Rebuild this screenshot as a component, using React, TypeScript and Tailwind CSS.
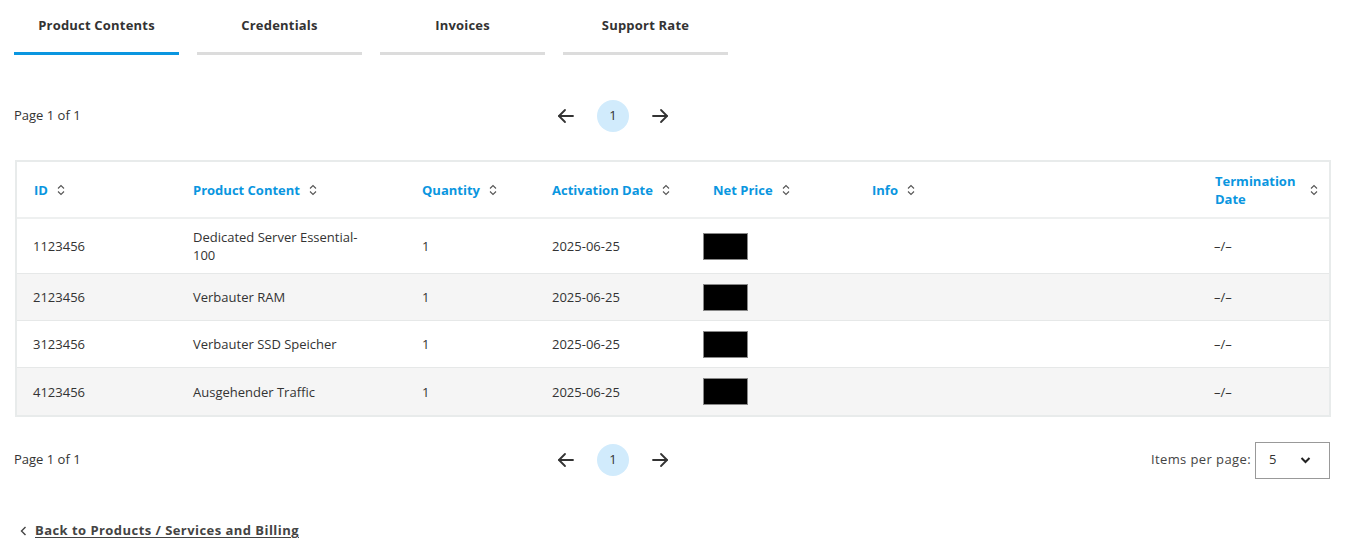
import React from "react";

const font = { fontFamily: '"Open Sans", "Liberation Sans", sans-serif' };

const tabs = ["Product Contents", "Credentials", "Invoices", "Support Rate"];

const rows = [
  { id: "1123456", product: ["Dedicated Server Essential-", "100"], qty: "1", date: "2025-06-25" },
  { id: "2123456", product: ["Verbauter RAM"], qty: "1", date: "2025-06-25" },
  { id: "3123456", product: ["Verbauter SSD Speicher"], qty: "1", date: "2025-06-25" },
  { id: "4123456", product: ["Ausgehender Traffic"], qty: "1", date: "2025-06-25" },
];

const cols = "grid grid-cols-[159px_229px_130px_161px_159px_343px_1fr]";

function SortIcon() {
  return (
    <svg width="8" height="12" viewBox="0 0 8 12" className="shrink-0" fill="none" stroke="#555" strokeWidth="1.1">
      <path d="M1 4.5 L4 1.5 L7 4.5" />
      <path d="M1 7.5 L4 10.5 L7 7.5" />
    </svg>
  );
}

function Arrow({ dir }: { dir: "left" | "right" }) {
  return (
    <svg width="18" height="16" viewBox="0 0 18 16" fill="none" stroke="#333" strokeWidth="1.8" strokeLinecap="round" strokeLinejoin="round">
      {dir === "left" ? (
        <>
          <path d="M16 8 H2" />
          <path d="M8 2 L2 8 L8 14" />
        </>
      ) : (
        <>
          <path d="M2 8 H16" />
          <path d="M10 2 L16 8 L10 14" />
        </>
      )}
    </svg>
  );
}

function Pager() {
  return (
    <div className="flex items-center gap-[22px]">
      <Arrow dir="left" />
      <div className="w-8 h-8 rounded-full bg-[#d1ebfc] flex items-center justify-center text-[13px] text-[#333]">1</div>
      <Arrow dir="right" />
    </div>
  );
}

function Header({ label, wrap }: { label: string; wrap?: boolean }) {
  return (
    <div className="flex items-center gap-[9px] pl-[17px] pr-3">
      <span className={`text-[13px] font-bold text-[#0a96e0] leading-[18px] ${wrap ? "w-[86px]" : ""}`}>{label}</span>
      <SortIcon />
    </div>
  );
}

export default function App() {
  return (
    <div className="w-[1345px] h-[551px] bg-white text-[#333] px-[14px] overflow-hidden" style={font}>
      {/* Tabs */}
      <div className="flex gap-[18px]">
        {tabs.map((t, i) => (
          <div
            key={t}
            className={`w-[165px] h-[55px] flex items-start justify-center pt-[16px] text-[13px] font-bold text-[#333] tracking-[0.2px] border-b-[3px] ${
              i === 0 ? "border-[#0a96e0]" : "border-[#dcdcdc]"
            }`}
          >
            {t}
          </div>
        ))}
      </div>

      {/* Top pager */}
      <div className="relative flex items-center h-[34px] mt-[44px]">
        <span className="text-[13px]">Page 1 of 1</span>
        <div className="absolute left-[543px] top-[1px]">
          <Pager />
        </div>
      </div>

      {/* Table */}
      <div className="mt-[27px] ml-px w-[1316px] border-2 border-[#e8ebeb]">
        <div className={`${cols} h-[57px] border-b-2 border-[#eef0f0] bg-white`}>
          <Header label="ID" />
          <Header label="Product Content" />
          <Header label="Quantity" />
          <Header label="Activation Date" />
          <Header label="Net Price" />
          <Header label="Info" />
          <Header label="Termination Date" wrap />
        </div>
        {rows.map((r, i) => (
          <div
            key={r.id}
            className={`${cols} text-[13px] leading-[18px] ${i === 0 ? "h-[55px]" : "h-[47px]"} ${
              i % 2 === 1 ? "bg-[#f5f5f5]" : "bg-white"
            } ${i < rows.length - 1 ? "border-b border-[#e6e8e8]" : ""}`}
          >
            <div className="flex items-center pl-[16px]">{r.id}</div>
            <div className="flex flex-col justify-center pl-[17px]">
              {r.product.map((p) => (
                <span key={p}>{p}</span>
              ))}
            </div>
            <div className="flex items-center pl-[17px]">{r.qty}</div>
            <div className="flex items-center pl-[17px]">{r.date}</div>
            <div className="flex items-center pl-[7px]">
              <div className="w-[45px] h-[27px] bg-black border border-[#888]" />
            </div>
            <div />
            <div className="flex items-center pl-[16px]">–/–</div>
          </div>
        ))}
      </div>

      {/* Bottom pager */}
      <div className="relative flex items-center justify-between h-[38px] mt-[24px] pr-[1px]">
        <span className="text-[13px]">Page 1 of 1</span>
        <div className="absolute left-[543px] top-[3px]">
          <Pager />
        </div>
        <div className="flex items-center gap-[4px]">
          <span className="text-[13px] text-[#444] tracking-[0.4px]">Items per page:</span>
          <div className="w-[75px] h-[37px] border border-[#999] flex items-center justify-between pl-[13px] pr-[18px] text-[13px]">
            <span>5</span>
            <svg width="11" height="8" viewBox="0 0 11 8" fill="none" stroke="#222" strokeWidth="2">
              <path d="M1.5 2 L5.5 6 L9.5 2" />
            </svg>
          </div>
        </div>
      </div>

      {/* Back link */}
      <div className="flex items-center gap-[8px] mt-[42px] pl-[6px]">
        <svg width="7" height="10" viewBox="0 0 7 10" fill="none" stroke="#444" strokeWidth="1.4">
          <path d="M5.5 1 L1.5 5 L5.5 9" />
        </svg>
        <a className="text-[13px] font-bold text-[#444] underline underline-offset-2 tracking-[0.45px]">Back to Products / Services and Billing</a>
      </div>
    </div>
  );
}
